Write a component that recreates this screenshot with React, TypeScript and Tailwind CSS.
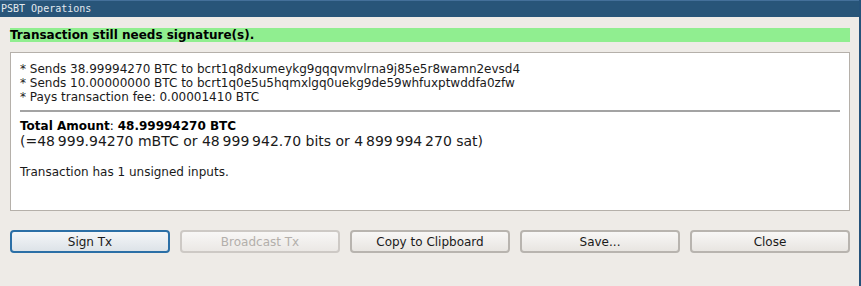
import React from "react";

const buttons = [
  { label: "Sign Tx", focused: true },
  { label: "Broadcast Tx", disabled: true },
  { label: "Copy to Clipboard" },
  { label: "Save..." },
  { label: "Close" },
];

const App = () => {
  return (
    <div className="w-[861px] h-[286px] bg-[#eeebe7] border-r-2 border-[#25527a] flex flex-col font-['DejaVu_Sans',sans-serif] text-[#1a1a1a] overflow-hidden">
      {/* window title */}
      <div className="h-[17px] bg-[#285579] border-t border-[#44709a] pl-[1px] text-[10px] leading-[15px] text-[#e3e9ef] font-['DejaVu_Sans_Mono',monospace]">
        PSBT Operations
      </div>

      <div className="flex flex-col pl-[10px] pr-[9px] pt-[11px]">
        <div className="h-[14px] bg-[#90ee90] text-[12px] leading-[14px] font-bold text-black">
          Transaction still needs signature(s).
        </div>

        <div className="mt-[10px] h-[159px] border border-[#b5b0aa] bg-white px-[9px] pt-[9px] text-[12px] leading-[14px]">
          <p>* Sends 38.99994270 BTC to bcrt1q8dxumeykg9gqqvmvlrna9j85e5r8wamn2evsd4</p>
          <p>* Sends 10.00000000 BTC to bcrt1q0e5u5hqmxlgq0uekg9de59whfuxptwddfa0zfw</p>
          <p>* Pays transaction fee: 0.00001410 BTC</p>
          <div className="mt-[6px] h-[2px] bg-[#a3a3a3]" />
          <p className="mt-[7px] text-black">
            <b>Total Amount</b>: <b>48.99994270 BTC</b>
          </p>
          <p className="text-[14px] leading-[16px]">
            (=48{"\u2009"}999.94270 mBTC or 48{"\u2009"}999{"\u2009"}942.70 bits or 4{"\u2009"}899{"\u2009"}994{"\u2009"}270 sat)
          </p>
          <p className="mt-[16px]">Transaction has 1 unsigned inputs.</p>
        </div>

        <div className="mt-[19px] grid grid-cols-5 gap-[10px]">
          {buttons.map((b) => (
            <button
              key={b.label}
              disabled={b.disabled}
              className={
                b.focused
                  ? "h-[23px] rounded-[4px] border-2 border-[#2b6fa6] bg-gradient-to-b from-[#f4f6f8] to-[#dde3e8] text-[12px] text-[#1a1a1a]"
                  : b.disabled
                  ? "h-[23px] rounded-[4px] border-2 border-[#cdc9c5] bg-gradient-to-b from-[#f8f7f6] to-[#ebe8e5] text-[12px] text-[#b3afab]"
                  : "h-[23px] rounded-[4px] border-2 border-[#b8b4af] bg-gradient-to-b from-[#f8f7f6] to-[#e8e5e1] text-[12px] text-[#1a1a1a]"
              }
            >
              {b.label}
            </button>
          ))}
        </div>
      </div>
    </div>
  );
};

export default App;
